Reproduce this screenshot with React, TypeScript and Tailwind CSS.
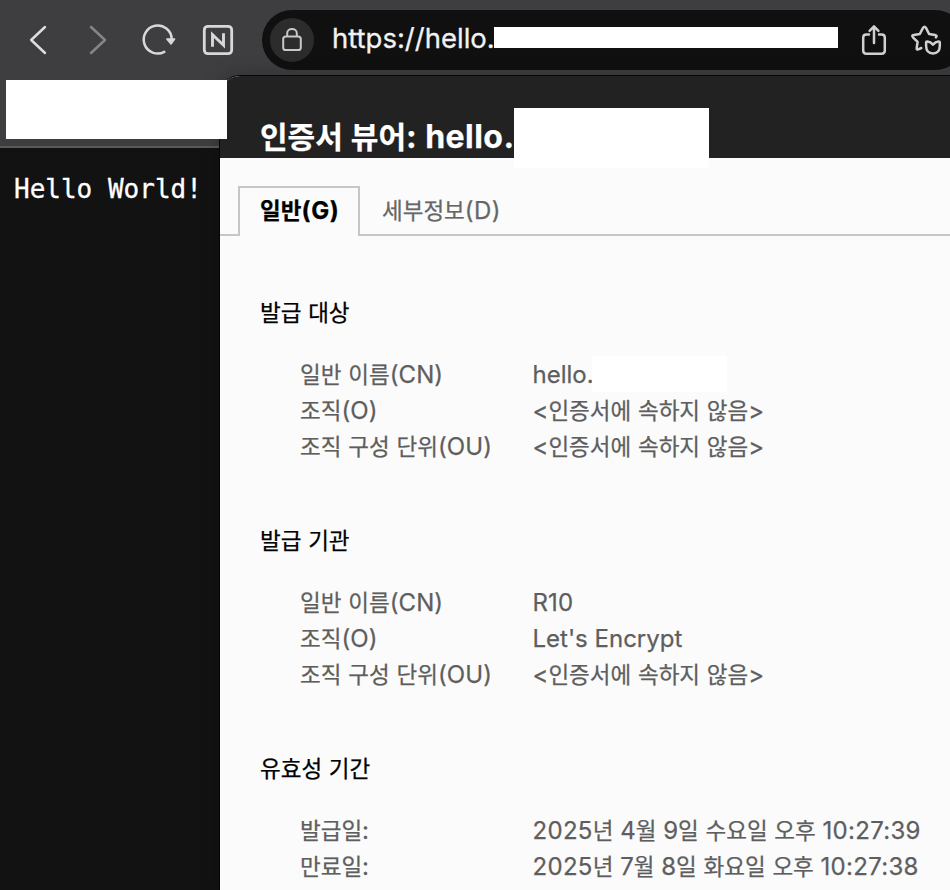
import React from "react";

const LATIN = "font-['Inter','Noto_Sans_CJK_KR',sans-serif]";

/* Mixed-script line: Hangul runs are set slightly smaller than the Latin text. */
function Mixed({ text, hangul = "text-[22.5px]" }: { text: string; hangul?: string }) {
  const parts = text.split(/([가-힣]+|[0-9:]{2,})/).filter(Boolean);
  return (
    <>
      {parts.map((part, i) =>
        /[가-힣]/.test(part) ? (
          <span key={i} className={`font-['Noto_Sans_CJK_KR',sans-serif] leading-none tracking-normal ${hangul}`}>
            {part}
          </span>
        ) : /^[0-9:]{2,}$/.test(part) ? (
          <span key={i} className="tracking-[0.3px]">
            {part}
          </span>
        ) : (
          <span key={i}>{part}</span>
        ),
      )}
    </>
  );
}

const sections = [
  {
    title: "발급 대상",
    rows: [
      ["일반 이름(CN)", "hello."],
      ["조직(O)", "<인증서에 속하지 않음>"],
      ["조직 구성 단위(OU)", "<인증서에 속하지 않음>"],
    ],
  },
  {
    title: "발급 기관",
    rows: [
      ["일반 이름(CN)", "R10"],
      ["조직(O)", "Let's Encrypt"],
      ["조직 구성 단위(OU)", "<인증서에 속하지 않음>"],
    ],
  },
  {
    title: "유효성 기간",
    rows: [
      ["발급일:", "2025년 4월 9일 수요일 오후 10:27:39"],
      ["만료일:", "2025년 7월 8일 화요일 오후 10:27:38"],
    ],
  },
];

function Toolbar() {
  return (
    <header className="flex h-20 w-full shrink-0 items-center overflow-hidden">
      <svg className="h-20 w-[262px] shrink-0" viewBox="0 0 262 80" fill="none" strokeLinecap="round" strokeLinejoin="round">
        <path d="M45 27 L31.2 40 L45 53" stroke="#dcdcdc" strokeWidth="2.5" />
        <path d="M91 27 L105 40 L91 53" stroke="#858587" strokeWidth="2.5" />
        <path d="M164.3 51.9 A14 14 0 1 1 171.7 39" stroke="#d8d8d8" strokeWidth="2.5" />
        <path d="M166.8 39 H174.6 L171 44 Z" fill="#d8d8d8" stroke="#d8d8d8" strokeWidth="1.5" />
        <rect x="204.3" y="26.3" width="27.4" height="27.4" rx="3.6" stroke="#d8d8d8" strokeWidth="2.8" />
        <path d="M212.5 46.8 V34.6 L223.5 45.2 V33.2" stroke="#d8d8d8" strokeWidth="2.9" strokeLinecap="butt" strokeLinejoin="miter" />
      </svg>
      <div className="flex h-[60px] w-[703px] shrink-0 items-center rounded-full bg-[#101010] pl-2">
        <div className="flex size-11 items-center justify-center rounded-full bg-[#2c2c2c]">
          <svg className="size-11" viewBox="0 0 44 44" fill="none" stroke="#c8c8c8" strokeWidth="2">
            <rect x="13.2" y="18.4" width="17.6" height="13.6" rx="2.6" />
            <path d="M17.2 18 V15 C17.2 9.6 26.8 9.6 26.8 15 V18" />
          </svg>
        </div>
        <div className={`ml-[18px] flex h-[60px] w-[506px] items-center text-[27.5px] leading-none text-[#f2f2f2] [-webkit-text-stroke:0.3px_currentColor] ${LATIN}`}>
          <span className="w-[162px] shrink-0 whitespace-nowrap pb-[2px]">https://hello.</span>
          <span className="mb-[5px] h-[21px] flex-1 bg-white" />
        </div>
        <svg className="h-[60px] w-[112px] shrink-0" viewBox="838 10 112 60" fill="none" stroke="#d0d0d0" strokeWidth="2.5" strokeLinecap="round" strokeLinejoin="round">
          <path d="M869 34.4 H866.4 Q863.2 34.4 863.2 37.6 V50.6 Q863.2 53.8 866.4 53.8 H881.6 Q884.8 53.8 884.8 50.6 V37.6 Q884.8 34.4 881.6 34.4 H879" />
          <path d="M874 43 V27.5 M869.6 30.8 L874 26.4 L878.4 30.8" />
          <path d="M921.3 48 L918.2 49.4 Q916.4 49.9 916.7 48 L917.6 41.8 L912.9 37.3 Q911.3 35.4 913.7 34.9 L919.8 34 L923 27.9 Q924.5 25.6 926 27.9 L929.1 34 L935 34.9 Q937.6 35.6 935.9 37.4" />
          <path d="M926.1 42.6 Q926.1 41.4 927.4 41.4 Q930.6 41.6 933 44.6 Q935.4 41.6 938.4 41.4 Q939.8 41.4 939.8 42.6 V46 Q939.6 53.4 933 53.4 Q926.3 53.4 926.1 46 Z" />
        </svg>
      </div>
    </header>
  );
}

function CertificateDialog() {
  return (
    <section className={`absolute left-[220px] top-[76px] flex h-[814px] w-[750px] flex-col overflow-hidden rounded-tl-[20px] bg-[#fbfbfb] text-2xl shadow-[0_0_0_1px_#050505,0_0_20px_rgba(0,0,0,0.25)] [-webkit-text-stroke:0.25px_currentColor] ${LATIN}`}>
      <div className="flex h-[82px] shrink-0 bg-[#222222] pl-10 pt-[44px] text-[32px] font-bold leading-[34px] text-white">
        <h1 className="whitespace-pre tracking-[0.45px]">
          <Mixed text="인증서 뷰어: hello." hangul="text-[30px]" />
        </h1>
      </div>
      <nav className="mt-7 flex h-[50px] shrink-0">
        <div className="w-[18px] border-b-2 border-[#c6c6c6]" />
        <div className="w-[122px] whitespace-pre border-2 border-b-0 border-[#c6c6c6] pl-5 font-bold leading-[46px] tracking-[0.7px] text-black">
          <Mixed text="일반(G)" />
        </div>
        <div className="flex-1 whitespace-pre border-b-2 border-[#c6c6c6] pl-[22px] leading-[50px] tracking-[0.4px] text-[#666666]">
          <Mixed text="세부정보(D)" />
        </div>
      </nav>
      <main className="flex flex-col gap-[58px] pl-10 pt-[59px]">
        {sections.map((section) => (
          <section key={section.title} className="flex shrink-0 flex-col">
            <h2 className="h-9 whitespace-pre leading-9 text-black">
              <Mixed text={section.title} />
            </h2>
            <dl className="mt-[26px] grid grid-cols-[232.5px_1fr] pl-10 text-[#5e5e5e]">
              {section.rows.map(([label, value], i) => (
                <React.Fragment key={i}>
                  <dt className="h-9 whitespace-pre leading-9 tracking-[0.1px]">
                    <Mixed text={label} />
                  </dt>
                  <dd className="h-9 whitespace-pre leading-9">
                    <Mixed text={value} />
                  </dd>
                </React.Fragment>
              ))}
            </dl>
          </section>
        ))}
      </main>
    </section>
  );
}

export default function App() {
  return (
    <div className="relative flex h-[890px] w-[950px] flex-col overflow-hidden bg-[#3e3e40]">
      <Toolbar />
      <div className="h-[66px] shrink-0" />
      <div className="flex-1 border-t-2 border-[#5a5a5a] bg-[#121212] pl-[14px] pt-[25px]">
        <pre className="font-['DejaVu_Sans_Mono',monospace] text-[26px] leading-8 text-white [-webkit-text-stroke:0.3px_currentColor]">Hello World!</pre>
      </div>
      <CertificateDialog />
      <div className="absolute left-[6px] top-[80px] h-[59px] w-[221px] bg-white" />
      <div className="absolute left-[514px] top-[108px] h-[60px] w-[195px] bg-white" />
      <div className="absolute left-[592px] top-[356px] h-[36px] w-[135px] bg-white" />
    </div>
  );
}
